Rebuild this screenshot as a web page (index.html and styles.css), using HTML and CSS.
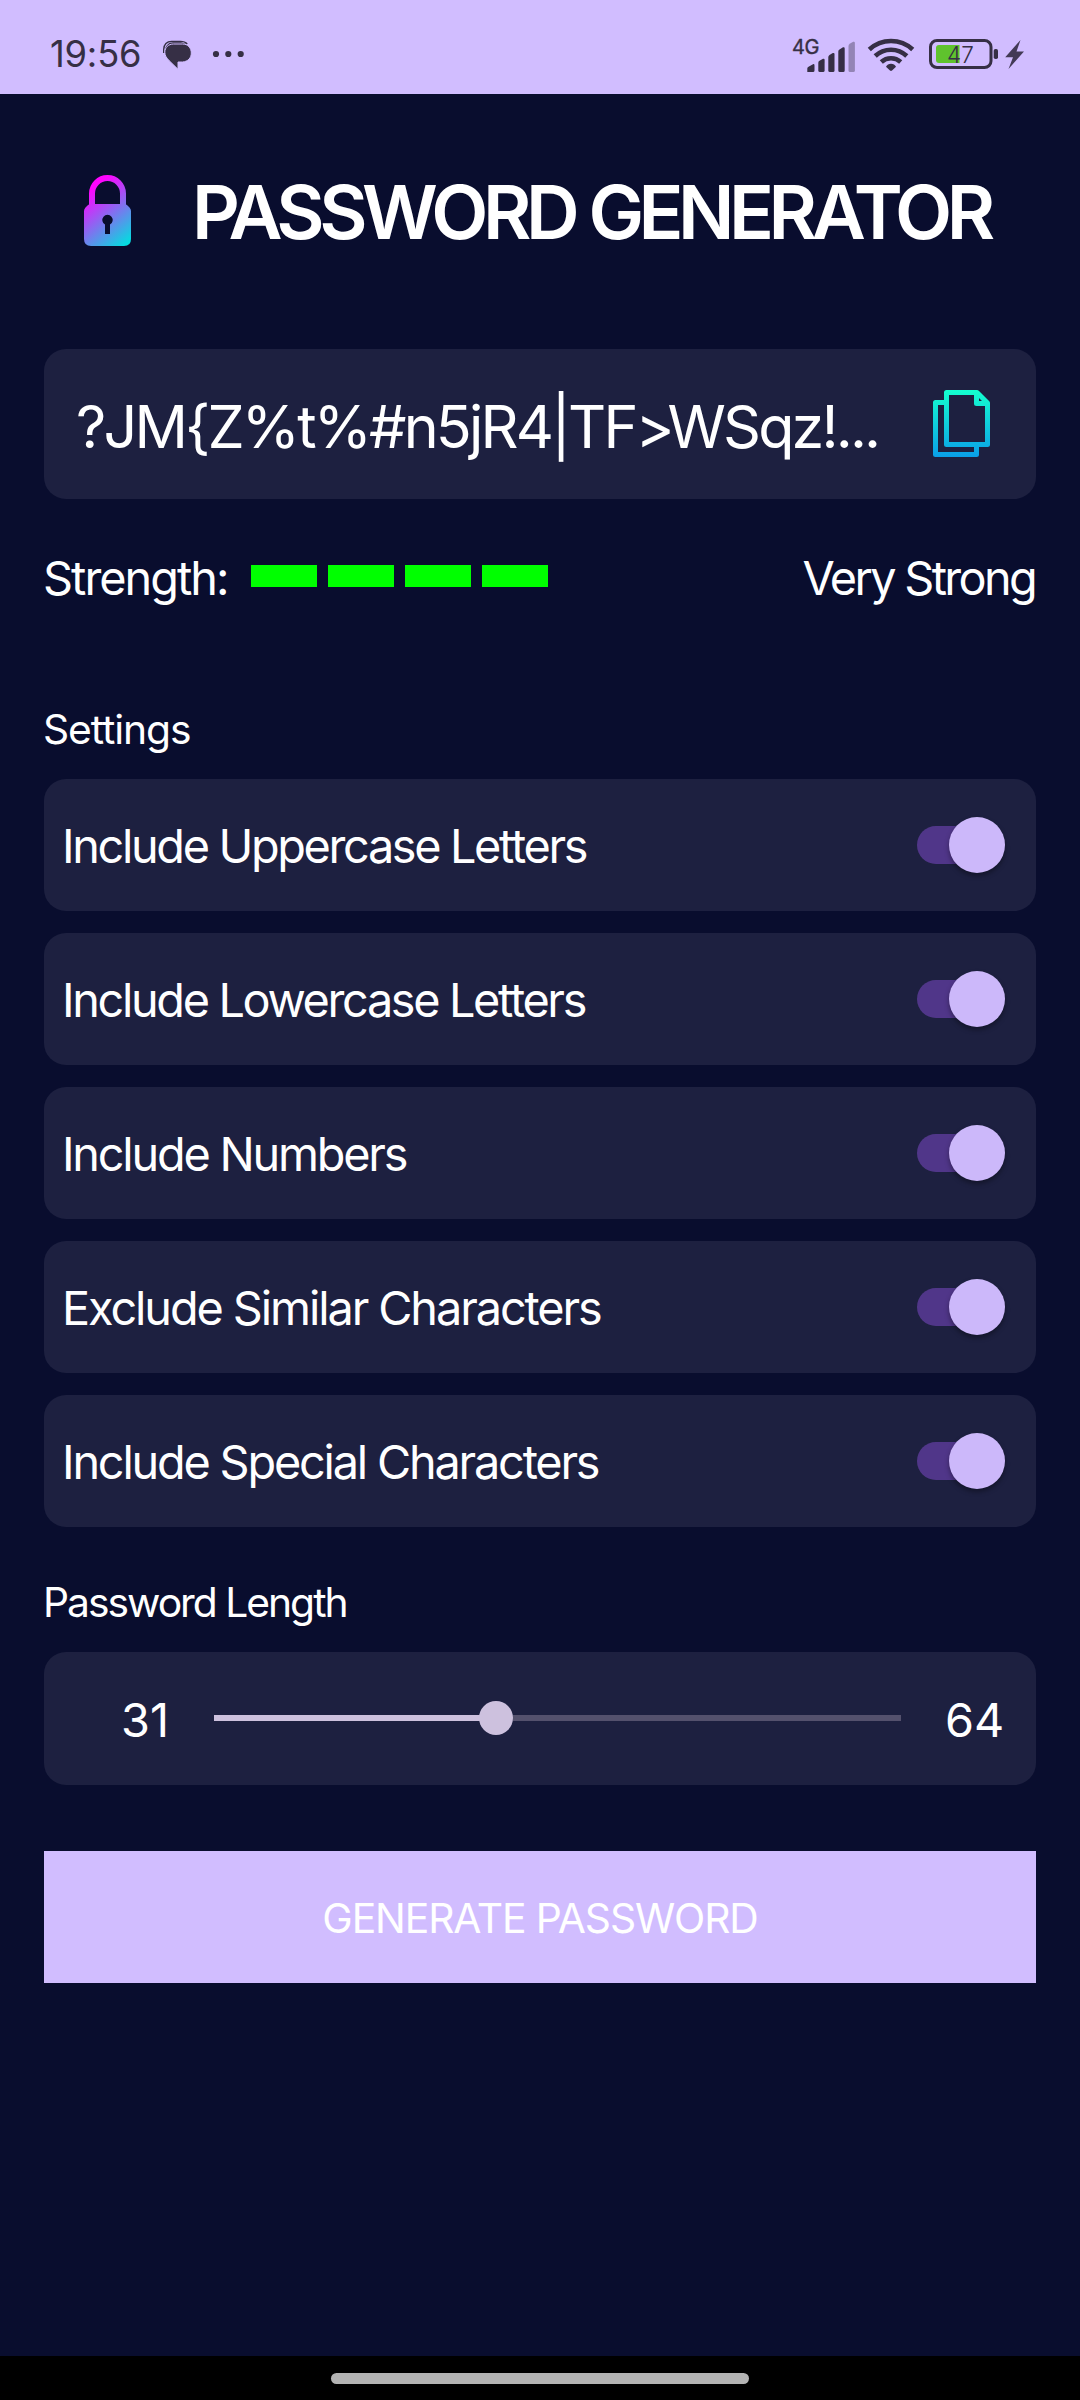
FILE: index.html
```html
<!DOCTYPE html>
<html lang="en">
<head>
<meta charset="utf-8">
<title>Password Generator</title>
<link rel="stylesheet" href="styles.css">
</head>
<body>
<div class="screen">
  <header class="status">
    <div class="status-left">
      <span class="clock">19:56</span>
      <svg class="chat" width="30" height="30" viewBox="0 0 30 30">
        <path d="M1.700 13V9.500C1.700 4.500 5 1.400 9.500 1.400H18.500C21.500 1.400 23.800 2.400 25.200 4" fill="none" stroke="#362f45" stroke-width="1.400"/>
        <path d="M3 9C4 5 7 2.200 11 2.200H19L24 4Z" fill="#362f45"/>
        <path d="M11.500 4H20.500C26 4 29.300 8 29.300 13C29.300 18 26 21.500 20.500 22H16V29.300L7.500 21C4.500 18 2.800 15.500 2.800 12.200C2.800 7.500 6.500 4 11.500 4Z" fill="#362f45" stroke="#d1bdff" stroke-width="1"/>
      </svg>
      <svg class="dots" width="32" height="8" viewBox="0 0 32 8" fill="#362f45"><circle cx="4" cy="4" r="3.100"/><circle cx="16.300" cy="4" r="3.100"/><circle cx="28.700" cy="4" r="3.100"/></svg>
    </div>
    <div class="status-right">
      <svg width="70" height="46" viewBox="786 30 70 46" fill="#362f45">
        <text class="network" x="792" y="52">4G</text>
        <path d="M807.300 70V66.500Q807.300 65.300 808.500 64.800L813 62.200Q814.500 61.800 814.500 63.400V68.500Q814.500 70 813 70Z"/>
        <path d="M818.300 68.500V60.800Q818.300 59.500 819.500 58.800L823 56.800Q824.600 56.300 824.600 58V68.500Q824.600 70 823 70H819.800Q818.300 70 818.300 68.500Z"/>
        <path d="M828.300 68.500V55Q828.300 53.800 829.500 53L832.800 51Q834.500 50.500 834.500 52V68.500Q834.500 70 833 70H829.800Q828.300 70 828.300 68.500Z"/>
        <path d="M838.300 68.500V49.500Q838.300 48.200 839.500 47.500L843 45.300Q844.700 44.700 844.700 46.400V68.500Q844.700 70 843.200 70H839.800Q838.300 70 838.300 68.500Z"/>
        <path opacity=".4" d="M848.500 68.500V44Q848.500 42.500 849.700 41.800L853.200 39.800Q854.900 39.300 854.900 41V68.500Q854.900 70 853.400 70H850Q848.500 70 848.500 68.500Z"/>
      </svg>
      <svg class="wifi" width="48" height="36" viewBox="867 36 48 36" fill="none" stroke="#362f45" stroke-width="4.600">
        <path d="M869.300 49.500A32 32 0 0 1 912.700 49.500"/>
        <path d="M875.200 56A23 23 0 0 1 906.800 56"/>
        <path d="M881.300 62A14.500 14.500 0 0 1 900.700 62"/>
        <path d="M886 66.800Q887.500 63.800 891 63.800Q894.500 63.800 896 66.800L892 70.600Q891 71.300 890 70.600Z" fill="#362f45" stroke="none"/>
      </svg>
      <svg class="battery" width="70" height="32" viewBox="928 38 70 32">
        <rect x="930.500" y="40.500" width="60.500" height="27" rx="6.500" fill="none" stroke="#362f45" stroke-width="3"/>
        <path d="M939 45H959.500V63H939Q936 63 936 60V48Q936 45 939 45Z" fill="#5fc32d"/>
        <rect x="993.700" y="49" width="4.300" height="10" rx="1.800" fill="#362f45"/>
        <text class="level" x="947" y="62.500">47</text>
      </svg>
      <svg class="bolt" width="20" height="30" viewBox="1005 40 20 30"><path d="M1020.500 40L1005.200 57.200H1013L1008.500 69L1024 51.500H1016.500Z" fill="#433a56"/></svg>
    </div>
  </header>

  <main class="app">
    <div class="heading">
      <svg class="lock" width="47" height="71" viewBox="0 0 47 71">
        <defs><linearGradient id="lockFill" gradientUnits="userSpaceOnUse" x1="5" y1="16" x2="46" y2="66"><stop offset="0" stop-color="#ff04ff"/><stop offset="1" stop-color="#04dce0"/></linearGradient></defs>
        <path d="M8 34V18.500A15.500 15.500 0 0 1 39 18.500V34" fill="none" stroke="url(#lockFill)" stroke-width="6"/>
        <path fill="url(#lockFill)" fill-rule="evenodd" d="M6 29H41Q42 29 43.500 30.500L45.500 32.500Q47 34 47 36V64Q47 71 40 71H7Q0 71 0 64V36Q0 34 1.500 32.500L3.500 30.500Q5 29 6 29ZM21 49.500V59H26V49.500A5.200 5.200 0 1 0 21 49.500Z"/>
      </svg>
      <h1 class="title">PASSWORD GENERATOR</h1>
    </div>

    <section class="card password">
      <span class="password-text">?JM{Z%t%#n5jR4|TF&gt;WSqz!...</span>
      <svg class="copy" width="57" height="67" viewBox="0 0 57 67" fill="none" stroke="url(#copyFill)" stroke-width="5" stroke-linejoin="round">
        <defs><linearGradient id="copyFill" gradientUnits="userSpaceOnUse" x1="0" y1="0" x2="0" y2="67"><stop offset="0" stop-color="#14ffcf"/><stop offset="1" stop-color="#0a9fe8"/></linearGradient></defs>
        <path d="M13.500 2.500H44L54.500 13V54.500H13.500Z"/>
        <path d="M43.500 3V13.500H54"/>
        <path d="M13.500 12.500H2.500V64.500H43.500V54.500"/>
      </svg>
    </section>

    <section class="strength">
      <span class="strength-label">Strength:</span>
      <div class="meter"><i class="bar"></i><i class="bar"></i><i class="bar"></i><i class="bar"></i></div>
      <span class="strength-value">Very Strong</span>
    </section>

    <h2 class="section-title settings-title">Settings</h2>
    <div class="options">
      <div class="card option"><span class="upper">Include Uppercase Letters</span><span class="switch"></span></div>
      <div class="card option"><span class="upper">Include Lowercase Letters</span><span class="switch"></span></div>
      <div class="card option"><span class="numbers">Include Numbers</span><span class="switch"></span></div>
      <div class="card option"><span class="similar">Exclude Similar Characters</span><span class="switch"></span></div>
      <div class="card option"><span class="special">Include Special Characters</span><span class="switch"></span></div>
    </div>

    <h2 class="section-title length-title">Password Length</h2>
    <div class="card length">
      <span class="number">31</span>
      <div class="slider"><div class="fill"></div><div class="knob"></div><div class="rest"></div></div>
      <span class="number">64</span>
    </div>

    <button class="generate">GENERATE PASSWORD</button>
  </main>
  <footer class="nav"><div class="pill"></div></footer>
</div>
</body>
</html>
```
FILE: styles.css
```css
* { box-sizing: border-box; }
body { margin: 0; }
.screen {
  display: flex;
  flex-direction: column;
  width: 1080px;
  height: 2400px;
  overflow: hidden;
  background: #090d2e;
  color: #fff;
  font-family: "Inter", "Roboto", sans-serif;
  font-size: 46.8px;
  line-height: 1.21;
  white-space: nowrap;
}
svg { display: block; flex: none; }

/* status bar */
.status {
  display: flex;
  justify-content: space-between;
  height: 94px;
  padding: 15px 55px 0 50px;
  background: #d1bdff;
  color: #362f45;
}
.status-left, .status-right { display: flex; align-items: center; }
.status-left { font-size: 36.3px; }
.clock { padding-top: 1px; letter-spacing: -0.2px; }
.chat { margin-left: 21px; }
.dots { margin-left: 20px; margin-top: -2px; }
.network { font-size: 20px; letter-spacing: -0.4px; stroke: #362f45; stroke-width: 0.4px; }
.level { font-size: 22.5px; font-weight: 300; fill: #362f45; }
.wifi { margin-left: 11px; margin-top: -1px; }
.battery { margin-left: 13px; margin-top: -1px; }
.bolt { margin-left: 7px; }

/* page */
.app { flex: 1; display: flex; flex-direction: column; padding: 0 44px; }
.heading { display: flex; align-items: center; height: 236px; padding-left: 40px; }
.lock { margin-bottom: 3px; }
.title {
  margin: 0 0 0 61px;
  padding-top: 1px;
  font-size: 74.3px;
  font-weight: 600;
  letter-spacing: -5.45px;
  word-spacing: 1px;
}
.card {
  display: flex;
  align-items: center;
  flex: none;
  border-radius: 22px;
  background: #1d2040;
}
.password {
  justify-content: space-between;
  height: 150px;
  margin-top: 19px;
  padding: 0 46px 0 32px;
}
.password-text { padding-top: 5px; font-size: 59.2px; letter-spacing: -2.82px; }
.copy { margin-bottom: 2px; }

.strength { display: flex; align-items: center; height: 58px; margin-top: 50px; }
.strength-label { width: 208px; margin-left: -1px; letter-spacing: -1.97px; }
.meter { display: flex; gap: 11px; padding-bottom: 4px; }
.bar { width: 66px; height: 22px; background: #00ff00; }
.strength-value { margin-left: auto; margin-right: 1px; letter-spacing: -2.65px; }

.section-title { margin: 0 0 0 -1px; font-size: 40.8px; font-weight: 400; line-height: 50px; }
.settings-title { margin-top: 97px; letter-spacing: -1.09px; }
.options { display: flex; flex-direction: column; gap: 22px; margin-top: 25px; }
.option { justify-content: space-between; height: 132px; padding: 0 31px 0 18px; }
.option > span:first-child { padding-top: 2px; }
.upper { letter-spacing: -2.33px; }
.numbers { letter-spacing: -2.2px; }
.similar { letter-spacing: -2.08px; }
.special { letter-spacing: -2.18px; }
.switch {
  display: flex;
  justify-content: flex-end;
  align-items: center;
  width: 88px;
  height: 38px;
  border-radius: 19px;
  background: linear-gradient(#503689, #503689) left / 70px 100% no-repeat;
}
.switch::after {
  content: "";
  flex: none;
  width: 56px;
  height: 56px;
  border-radius: 50%;
  background: #ccb8fa;
  box-shadow: 0 3px 5px rgba(0, 0, 0, 0.35);
}

.length-title { margin-top: 50px; letter-spacing: -2.01px; }
.length { height: 133px; margin-top: 25px; padding: 0 31px 0 77px; }
.number { padding-top: 3px; }
.slider { display: flex; align-items: center; width: 687px; margin: 0 44px 1px 45px; }
.fill { width: 266px; height: 6px; background: #cdc1de; }
.knob { width: 34px; height: 34px; margin-left: -1px; border-radius: 50%; background: #cdc1de; }
.rest { flex: 1; height: 6px; background: #54516d; }

.generate {
  height: 132px;
  margin-top: 66px;
  padding: 2px 0 0;
  border: 0;
  background: #d1bdff;
  color: #fff;
  font: 400 40.8px "Inter", sans-serif;
  letter-spacing: -1.11px;
}

.nav { display: flex; justify-content: center; height: 44px; padding-top: 17px; background: #000; }
.pill { width: 418px; height: 11px; border-radius: 6px; background: #b3b3b3; }
```
